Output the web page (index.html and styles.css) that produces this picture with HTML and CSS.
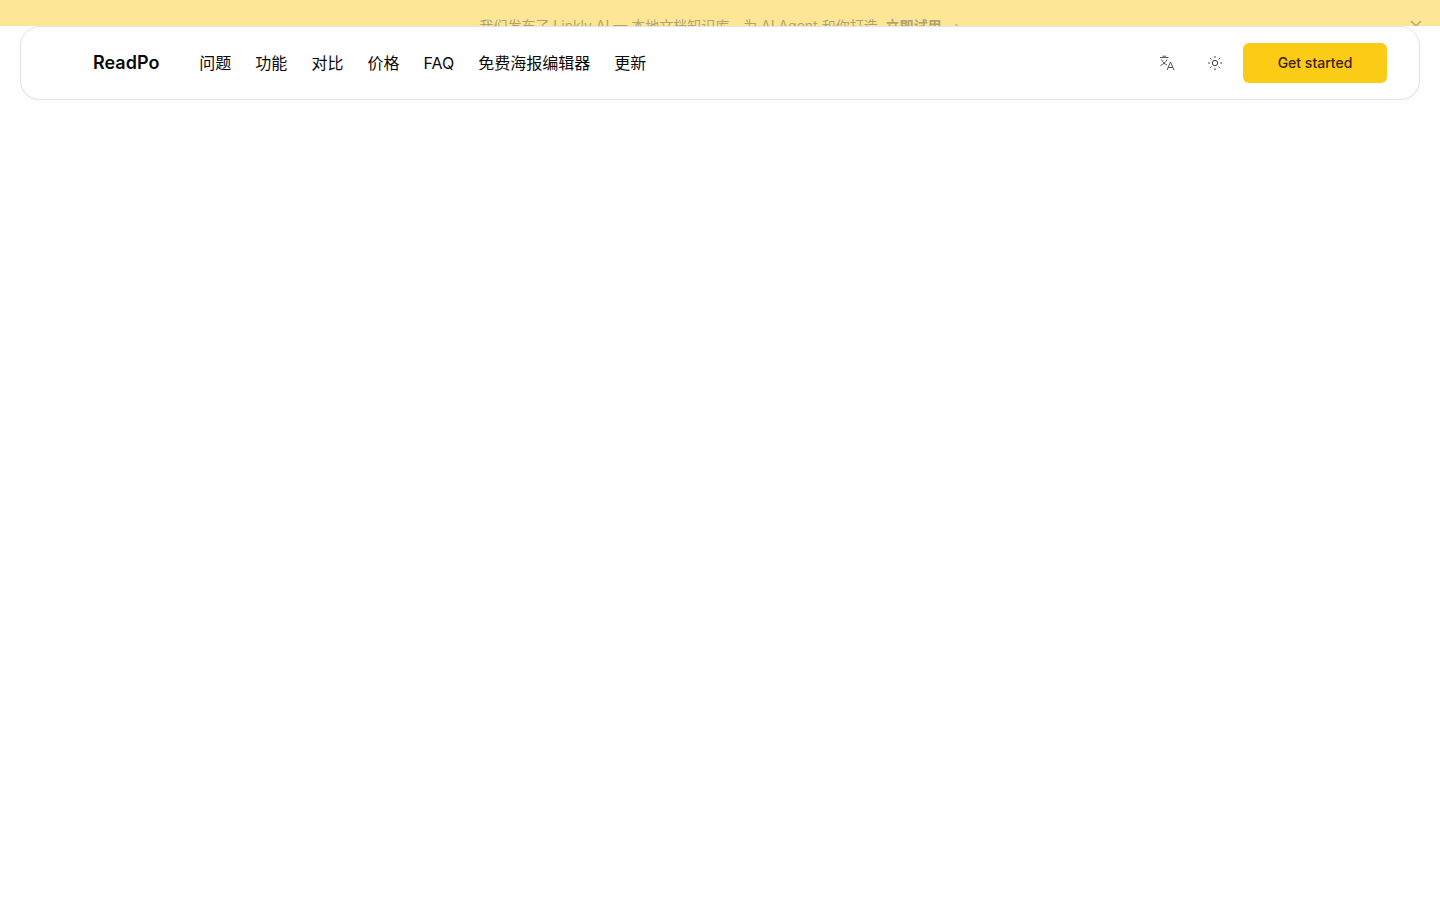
FILE: index.html
```html
<!DOCTYPE html>
<html lang="zh-CN">
  <head>
    <meta charset="UTF-8" />
    <meta name="viewport" content="width=device-width, initial-scale=1" />
    <title>ReadPo</title>
    <link rel="stylesheet" href="styles.css">
  </head>
  <body>
    <!-- Announcement, half collapsed -->
    <div class="banner">
      <div class="banner-content">
        <p>我们发布了 Linkly AI — 本地文档知识库，为 AI Agent 和你打造. <a href="#">立即试用 <span class="arrow">→</span></a></p>
        <button class="banner-close" aria-label="关闭">
          <svg width="16" height="16" viewBox="0 0 16 16" fill="none" stroke="currentColor" stroke-width="1.4" stroke-linecap="round">
            <path d="M3.500 3.500l9 9M12.500 3.500l-9 9" />
          </svg>
        </button>
      </div>
    </div>

    <header class="navbar">
      <a class="brand" href="#">ReadPo</a>
      <nav class="nav-links">
        <a href="#">问题</a>
        <a href="#">功能</a>
        <a href="#">对比</a>
        <a href="#">价格</a>
        <a href="#">FAQ</a>
        <a href="#">免费海报编辑器</a>
        <a href="#">更新</a>
      </nav>
      <div class="actions">
        <button class="icon-btn" aria-label="语言">
          <svg width="16" height="16" viewBox="0 0 16 16" fill="none" stroke="currentColor" stroke-width="0.900">
            <path d="M1 2.500h8.500M3.500 1.200h3.500M2.500 4.500c1 2.500 3 4.500 5.500 5.500M8 4.500C7 7 4.500 9 1.500 10.500" />
            <path d="M8 15l3.500-8 3.500 8M9.200 12.500h4.600" />
          </svg>
        </button>
        <button class="icon-btn" aria-label="主题">
          <svg width="16" height="16" viewBox="0 0 16 16" fill="none" stroke="currentColor" stroke-width="1">
            <circle cx="8" cy="8" r="2.700" />
            <path d="M8 1v1.800M8 13.200V15M1 8h1.800M13.200 8H15M3.200 3.200l1.200 1.200M11.600 11.600l1.200 1.200M3.200 12.800l1.200-1.200M11.600 4.400l1.200-1.200" />
          </svg>
        </button>
        <button class="cta">Get started</button>
      </div>
    </header>
  </body>
</html>
```

FILE: styles.css
```css
* {
  box-sizing: border-box;
}

body {
  margin: 0;
  background: #fefefe;
  color: #09090b;
  font-family: Inter, "Noto Sans CJK SC", sans-serif;
}

a {
  color: inherit;
  text-decoration: none;
}

button {
  padding: 0;
  border: none;
  background: none;
  color: inherit;
  font-family: inherit;
  cursor: pointer;
}

.banner {
  height: 26px;
  overflow: hidden;
  background: #fde696;
}

.banner-content {
  position: relative;
  padding: 16px 48px;
  color: #27272a;
  opacity: 0.35;
}

.banner-content p {
  margin: 0;
  font-size: 14px;
  line-height: 20px;
  text-align: center;
}

.banner-content a {
  font-weight: 600;
}

.arrow {
  margin-left: 4px;
  font-size: 12px;
  font-weight: 400;
}

.banner-close {
  position: absolute;
  top: 18px;
  right: 16px;
  width: 16px;
  height: 16px;
}

.banner-close svg {
  display: block;
}

.navbar {
  display: flex;
  align-items: center;
  height: 74px;
  margin: 0 20px;
  padding: 0 32px 0 72px;
  border: 1px solid #e4e4e7;
  border-radius: 20px;
  background: #fff;
  box-shadow: 0 1px 2px rgba(0, 0, 0, 0.05);
}

.brand {
  font-size: 18px;
  font-weight: 600;
  line-height: 28px;
}

.nav-links {
  display: flex;
  gap: 24px;
  margin-left: 40px;
  font-size: 16px;
  line-height: 24px;
}

.actions {
  display: flex;
  align-items: center;
  gap: 8px;
  margin-left: auto;
}

.icon-btn {
  display: flex;
  align-items: center;
  justify-content: center;
  width: 40px;
  height: 40px;
  color: #3f3f46;
}

.cta {
  width: 144px;
  height: 40px;
  border-radius: 6px;
  background: #facc15;
  color: #422006;
  font-size: 14px;
  font-weight: 500;
  line-height: 20px;
}
```
